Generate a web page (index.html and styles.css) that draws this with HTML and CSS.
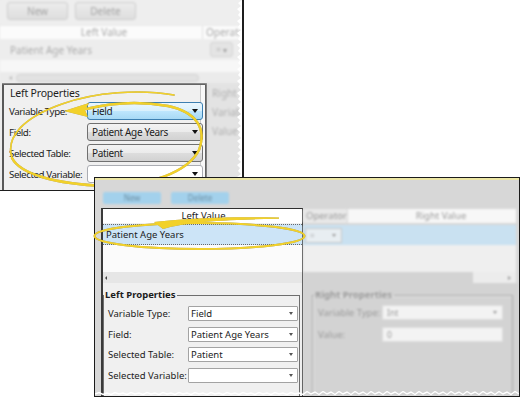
FILE: index.html
```html
<!DOCTYPE html>
<html>
<head>
<meta charset="utf-8">
<link rel="stylesheet" href="styles.css">
</head>
<body>
<div class="canvas">

  <section class="shot shot1">
    <div class="s1-top faded">
      <div class="s1-toolbar"><span class="btn1">New</span><span class="btn1">Delete</span></div>
      <div class="s1-header"><span class="h-left">Left Value</span><span class="h-op">Operator</span></div>
      <div class="s1-row"><span class="r-text">Patient Age Years</span><span class="mini1">= ▾</span></div>
      <div class="s1-blank"></div>
      <div class="s1-scroll"><span class="arr-l"></span><span class="thumb"></span></div>
    </div>
    <div class="s1-bottom">
      <div class="panel1">
        <div class="p1-title">Left Properties</div>
        <div class="p1-rows">
          <div class="p1-row"><span class="lbl1">Variable Type:</span><span class="combo1 blue">Field<i class="dd1"></i></span></div>
          <div class="p1-row"><span class="lbl1">Field:</span><span class="combo1">Patient Age Years<i class="dd1"></i></span></div>
          <div class="p1-row"><span class="lbl1">Selected Table:</span><span class="combo1">Patient<i class="dd1"></i></span></div>
          <div class="p1-row"><span class="lbl1">Selected Variable:</span><span class="combo1 white"><i class="dd1"></i></span></div>
        </div>
      </div>
      <div class="s1-right faded"><span>Right</span><span>Variab</span><span>Value</span></div>
    </div>
    <svg class="torn-r" width="6" height="190" viewBox="0 0 6 190"><polygon fill="#ffffff" points="6,0 2,3 5,6 1,9 4,12 2,15 5,18 1,21 4,24 2,27 5,30 1,33 4,36 2,39 5,42 1,45 4,48 2,51 5,54 1,57 4,60 2,63 5,66 1,69 4,72 2,75 5,78 1,81 4,84 2,87 5,90 1,93 4,96 2,99 5,102 1,105 4,108 2,111 5,114 1,117 4,120 2,123 5,126 1,129 4,132 2,135 5,138 1,141 4,144 2,147 5,150 1,153 4,156 2,159 5,162 1,165 4,168 2,171 5,174 1,177 4,180 2,183 5,186 1,189 6,190"/></svg>
  </section>

  <svg class="marks" width="530" height="407" viewBox="0 0 530 407">
    <g fill="none" stroke="#f2d12a" stroke-linecap="round">
      <path stroke-width="1.6" d="M174,95 C140,89 95,92 62,104 C25,117 5,136 12,158"/>
      <path stroke-width="2.4" d="M12,158 C20,174 55,184 105,186 C150,186 188,172 199,150 C207,128 196,112 168,106 C135,100 106,104 86,109"/>
    </g>
    <polygon fill="#f2d12a" points="64,111 89,103 85,110 88,117"/>
  </svg>

  <section class="shot shot2">
    <div class="s2-toolbar faded2"><span class="btn2">New</span><span class="btn2">Delete</span></div>
    <div class="s2-main">
      <div class="focus">
        <div class="f-header">Left Value</div>
        <div class="f-row">Patient Age Years</div>
        <div class="f-blank"></div>
        <div class="f-scroll"><span class="arr-l2"></span></div>
        <div class="f-group">
          <fieldset class="gbox">
            <legend>Left Properties</legend>
            <div class="g-rows">
              <div class="g-row"><span class="lbl2">Variable Type:</span><span class="combo2">Field<i class="dd2"></i></span></div>
              <div class="g-row"><span class="lbl2">Field:</span><span class="combo2">Patient Age Years<i class="dd2"></i></span></div>
              <div class="g-row"><span class="lbl2">Selected Table:</span><span class="combo2">Patient<i class="dd2"></i></span></div>
              <div class="g-row"><span class="lbl2">Selected Variable:</span><span class="combo2"><i class="dd2"></i></span></div>
            </div>
          </fieldset>
        </div>
      </div>
      <div class="right2 faded2">
        <div class="r-header"><span class="rh-op">Operator</span><span class="rh-val">Right Value</span></div>
        <div class="r-row"><span class="mini2">= <i class="dd3"></i></span></div>
        <div class="r-blank"></div>
        <div class="r-scroll"><span class="arr-r"></span></div>
        <div class="r-group">
          <fieldset class="gbox2">
            <legend>Right Properties</legend>
            <div class="r-rows">
              <div class="r-prow"><span class="lbl3">Variable Type:</span><span class="combo3">Int<i class="dd3"></i></span></div>
              <div class="r-prow"><span class="lbl3">Value:</span><span class="combo3">0</span></div>
            </div>
          </fieldset>
        </div>
      </div>
    </div>
    <svg class="torn-b" width="424" height="5" viewBox="0 0 424 5"><polyline fill="none" stroke="#ffffff" stroke-width="1.4" points="0,3 4,1.5 8,3.5 12,2 16,3.5 20,1.5 24,3 28,2 32,3.5 36,1.5 40,3 44,2 48,3.5 52,1.5 56,3 60,2 64,3.5 68,1.5 72,3 76,2 80,3.5 84,1.5 88,3 92,2 96,3.5 100,1.5 104,3 108,2 112,3.5 116,1.5 120,3 124,2 128,3.5 132,1.5 136,3 140,2 144,3.5 148,1.5 152,3 156,2 160,3.5 164,1.5 168,3 172,2 176,3.5 180,1.5 184,3 188,2 192,3.5 196,1.5 200,3 204,2 208,3.5 212,0.5 216,3 220,1 224,3.5 228,0.5 232,3 236,1 240,3.5 244,0.5 248,3 252,1 256,3.5 260,0.5 264,3 268,1 272,3.5 276,0.5 280,3 284,1 288,3.5 292,0.5 296,3 300,1 304,3.5 308,0.5 312,3 316,1 320,3.5 324,0.5 328,3 332,1 336,3.5 340,0.5 344,3 348,1 352,3.5 356,0.5 360,3 364,1 368,3.5 372,0.5 376,3 380,1 384,3.5 388,0.5 392,3 396,1 400,3.5 404,0.5 408,3 412,1 416,3.5 420,0.5 424,3"/></svg>
  </section>

  <svg class="marks" width="530" height="407" viewBox="0 0 530 407">
    <ellipse fill="none" stroke="#f2d12a" stroke-width="2" cx="199.5" cy="236" rx="105" ry="13"/>
    <path fill="#f2d12a" d="M279,217.6 C232,216.2 188,218.2 154,222 L163,229 C186,221.5 232,219.4 279,218.8 Z"/>
  </svg>

</div>
</body>
</html>
```

FILE: styles.css
```css
html, body {
  margin: 0;
  padding: 0;
  background: #ffffff;
}

.canvas {
  position: relative;
  width: 530px;
  height: 407px;
  overflow: hidden;
  font-family: "Noto Sans", "Open Sans", sans-serif;
}

.shot {
  position: absolute;
  box-sizing: border-box;
  overflow: hidden;
}

/* ---------- first (top) screenshot ---------- */
.shot1 {
  left: 0;
  top: 0;
  width: 244px;
  height: 191px;
  background: #ececec;
  border-right: 2px solid #1e1e1e;
  border-bottom: 1px solid #1e1e1e;
  display: flex;
  flex-direction: column;
}

.faded {
  filter: blur(0.8px);
}

.s1-toolbar {
  height: 24px;
  box-sizing: border-box;
  display: flex;
  gap: 7px;
  padding: 2px 0 0 7px;
  background: #eeeeee;
}

.btn1 {
  width: 61px;
  height: 18px;
  box-sizing: border-box;
  border: 1px solid #cdcdcd;
  border-radius: 3px;
  background: linear-gradient(#ececec, #dedede);
  color: #a3a3a3;
  font-size: 10px;
  display: flex;
  align-items: center;
  justify-content: center;
}

.s1-header {
  margin-top: 2px;
  height: 13px;
  display: grid;
  grid-template-columns: 203px 1fr;
  background: #fbfbfb;
  font-size: 10px;
  line-height: 13px;
  color: #a8a8a8;
  white-space: nowrap;
}

.h-left {
  text-align: center;
  padding-left: 6px;
  border-right: 1px solid #e0e0e0;
}

.h-op {
  padding-left: 3px;
  overflow: hidden;
}

.s1-row {
  height: 21px;
  display: grid;
  grid-template-columns: 203px 1fr;
  align-items: center;
  background: #ededed;
  font-size: 10px;
  color: #ababab;
}

.r-text {
  padding-left: 10px;
}

.mini1 {
  margin-left: 7px;
  width: 23px;
  height: 15px;
  box-sizing: border-box;
  border: 1px solid #d4d4d4;
  border-radius: 3px;
  background: #e4e4e4;
  font-size: 8px;
  line-height: 13px;
  text-align: center;
  color: #a0a0a0;
}

.s1-blank {
  height: 12px;
  background: #f7f7f7;
}

.s1-scroll {
  height: 11px;
  background: #ebebeb;
  display: flex;
  align-items: center;
  padding-left: 9px;
  gap: 4px;
}

.arr-l {
  width: 0;
  height: 0;
  border-top: 2px solid transparent;
  border-bottom: 2px solid transparent;
  border-right: 3px solid #b8b8b8;
}

.thumb {
  width: 183px;
  height: 8px;
  box-sizing: border-box;
  border: 1px solid #d3d3d3;
  border-radius: 4px;
  background: #e2e2e2;
}

.s1-bottom {
  flex: 1;
  display: flex;
}

.panel1 {
  margin-left: 2px;
  width: 211px;
  box-sizing: border-box;
  border: 2px solid #585858;
  border-bottom: none;
  background: #f0f0f0;
  box-shadow: inset -4px 0 0 #f8f8f8, inset -5px 0 0 #c8c8c8;
  color: #1e1e1e;
  font-size: 10px;
}

.p1-title {
  padding: 2px 0 0 6px;
  height: 12px;
  line-height: 12px;
  font-size: 10.5px;
  letter-spacing: -0.2px;
}

.p1-rows {
  margin-top: 3px;
  display: flex;
  flex-direction: column;
  gap: 3px;
}

.p1-row {
  display: grid;
  grid-template-columns: 78px 116px;
  align-items: center;
  padding-left: 5px;
  height: 18px;
}

.lbl1 {
  font-size: 9.8px;
  letter-spacing: -0.45px;
  white-space: nowrap;
}

.combo1 {
  height: 18px;
  box-sizing: border-box;
  border: 1px solid #707070;
  border-radius: 3px;
  background: linear-gradient(#f3f3f3 0%, #ebebeb 50%, #dddddd 51%, #d2d2d2 100%);
  display: flex;
  align-items: center;
  padding-left: 4px;
  font-size: 10px;
  letter-spacing: -0.35px;
  white-space: nowrap;
}

.combo1.blue {
  border-color: #3c7fb1;
  background: linear-gradient(#eaf6fd 0%, #d9f0fc 50%, #bee6fd 51%, #a7d9f5 100%);
}

.combo1.white {
  border-color: #abadb3;
  background: #ffffff;
}

.dd1 {
  margin-left: auto;
  margin-right: 4px;
  width: 0;
  height: 0;
  border-left: 3.5px solid transparent;
  border-right: 3.5px solid transparent;
  border-top: 4px solid #111;
}

.s1-right {
  flex: 1;
  background: #e3e3e3;
  border-left: 1px solid #d0d0d0;
  display: flex;
  flex-direction: column;
  padding: 4px 0 0 4px;
  gap: 6px;
  font-size: 10px;
  color: #b0b0b0;
  line-height: 13px;
}

.torn-r {
  position: absolute;
  right: 0;
  top: 0;
}

/* ---------- second screenshot ---------- */
.shot2 {
  left: 94px;
  top: 177px;
  width: 426px;
  height: 220px;
  border: 1px solid #1b1b1b;
  background: #d7d7d7;
  box-shadow: inset 0 2px 0 #ece6a4;
  display: flex;
  flex-direction: column;
}

.faded2 {
  filter: blur(0.8px);
}

.s2-toolbar {
  height: 30px;
  box-sizing: border-box;
  display: flex;
  gap: 10px;
  padding: 14px 0 0 8px;
}

.btn2 {
  width: 58px;
  height: 12px;
  background: #a3d1ec;
  border-radius: 2px;
  color: #6d8fa4;
  font-size: 8px;
  line-height: 12px;
  text-align: center;
}

.s2-main {
  flex: 1;
  display: flex;
  padding-left: 6px;
}

.focus {
  width: 202px;
  box-sizing: border-box;
  border-left: 2px solid #3a3a3a;
  border-top: 1px solid #2e2e2e;
  border-right: 1px solid #2e2e2e;
  background: #f0f0f0;
  display: flex;
  flex-direction: column;
  font-size: 9.5px;
  color: #1c1c1c;
}

.f-header {
  height: 14px;
  line-height: 14px;
  background: #ffffff;
  text-align: center;
  padding-left: 2px;
}

.f-row {
  margin-top: 1px;
  height: 21px;
  box-sizing: border-box;
  border-top: 1px dotted #6a6a6a;
  border-bottom: 1px dotted #6a6a6a;
  background: #cce4f7;
  line-height: 19px;
  padding-left: 3px;
}

.f-blank {
  height: 27px;
  background: #fbfbfb;
}

.f-scroll {
  height: 11px;
  background: #e6e6e6;
  display: flex;
  align-items: center;
  padding-left: 2px;
}

.arr-l2 {
  width: 0;
  height: 0;
  border-top: 2px solid transparent;
  border-bottom: 2px solid transparent;
  border-right: 2px solid #444;
}

.f-group {
  flex: 1;
  padding: 6px 2px 0 0;
}

.gbox {
  margin: 0;
  padding: 0 0 0 4px;
  border: 1px solid #6e6e6e;
  border-bottom: none;
  height: 100%;
  box-sizing: border-box;
}

.gbox legend {
  margin-left: -4px;
  padding: 0 2px 0 1px;
  font-weight: bold;
  font-size: 9.5px;
  line-height: 12px;
}

.g-rows {
  margin-top: 5px;
  display: flex;
  flex-direction: column;
  gap: 5.5px;
}

.g-row {
  display: grid;
  grid-template-columns: 80px 110px;
  align-items: center;
  height: 15px;
}

.lbl2 {
  white-space: nowrap;
}

.combo2 {
  height: 15px;
  box-sizing: border-box;
  border: 1px solid #a3a3a3;
  border-radius: 1px;
  background: #ffffff;
  display: flex;
  align-items: center;
  padding-left: 2px;
}

.dd2 {
  margin-left: auto;
  margin-right: 4px;
  width: 0;
  height: 0;
  border-left: 2.5px solid transparent;
  border-right: 2.5px solid transparent;
  border-top: 3px solid #555;
}

.right2 {
  flex: 1;
  display: flex;
  flex-direction: column;
  font-size: 9.5px;
  color: #9a9a9a;
}

.r-header {
  margin-top: 1px;
  height: 14px;
  line-height: 14px;
  display: grid;
  grid-template-columns: 44px 168px;
  gap: 1px;
}

.rh-op {
  background: #e8e8e8;
  padding-left: 3px;
}

.rh-val {
  background: #f7f7f7;
  text-align: center;
  padding-left: 18px;
}

.r-row {
  margin-top: 2px;
  width: 213px;
  height: 20px;
  background: #c9e1f1;
  display: flex;
  align-items: center;
  padding-left: 2px;
  box-sizing: border-box;
}

.mini2 {
  width: 37px;
  height: 15px;
  box-sizing: border-box;
  border: 1px solid #c8c8c8;
  background: #e8eef2;
  display: flex;
  align-items: center;
  padding-left: 4px;
  font-size: 8px;
}

.dd3 {
  margin-left: auto;
  margin-right: 5px;
  width: 0;
  height: 0;
  border-left: 2.5px solid transparent;
  border-right: 2.5px solid transparent;
  border-top: 3px solid #9a9a9a;
}

.r-blank {
  width: 213px;
  height: 27px;
  background: #efefef;
}

.r-scroll {
  width: 213px;
  height: 11px;
  background: linear-gradient(to right, #d3d3d3 0 170px, #ececec 170px);
  display: flex;
  align-items: center;
  justify-content: flex-end;
  padding-right: 5px;
  box-sizing: border-box;
}

.arr-r {
  width: 0;
  height: 0;
  border-top: 2px solid transparent;
  border-bottom: 2px solid transparent;
  border-left: 3px solid #9a9a9a;
}

.r-group {
  flex: 1;
  padding: 6px 6px 0 9px;
  background: #d3d3d3;
}

.gbox2 {
  margin: 0;
  padding: 0 0 0 5px;
  border: 1px solid #a9a9a9;
  border-bottom: none;
  box-shadow: inset 1px 1px 0 #e6e6e6;
  height: 100%;
  box-sizing: border-box;
}

.gbox2 legend {
  margin-left: -4px;
  padding: 0 2px 0 1px;
  font-weight: bold;
  line-height: 12px;
  color: #9a9a9a;
}

.r-rows {
  margin-top: 4px;
  display: flex;
  flex-direction: column;
  gap: 7px;
}

.r-prow {
  display: grid;
  grid-template-columns: 64px 121px;
  align-items: center;
  height: 15px;
}

.lbl3 {
  white-space: nowrap;
}

.combo3 {
  height: 15px;
  box-sizing: border-box;
  border: 1px solid #dcdcdc;
  background: #f3f3f3;
  display: flex;
  align-items: center;
  padding-left: 4px;
  font-size: 8.5px;
}

.torn-b {
  position: absolute;
  left: 0;
  bottom: 0;
}

/* ---------- annotations ---------- */
.marks {
  position: absolute;
  left: 0;
  top: 0;
  pointer-events: none;
  filter: drop-shadow(0.6px 0.8px 0.6px rgba(60, 50, 0, 0.45));
}
```
